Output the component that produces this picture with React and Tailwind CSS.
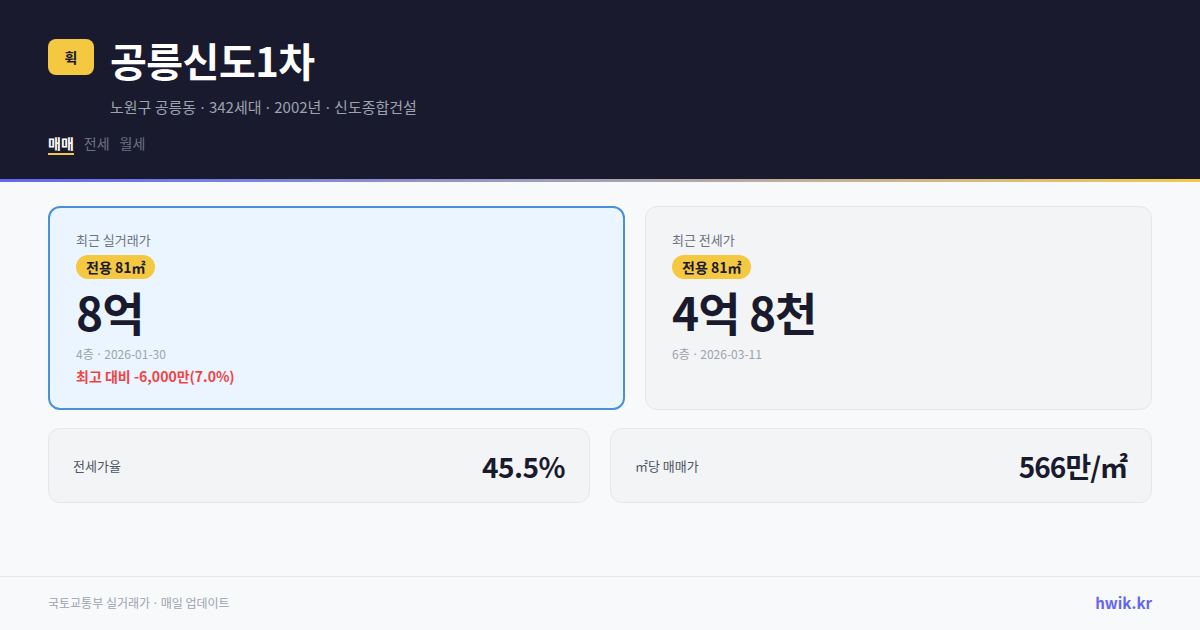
import React from "react";

const font = { fontFamily: '"Noto Sans CJK KR", "Noto Sans", sans-serif' };

function Dot() {
  return <span className="mx-[1px] font-['Noto_Sans',sans-serif]">·</span>;
}

function Badge() {
  return (
    <div className="inline-flex h-[24px] items-center rounded-full bg-[#f5c842] px-[10px] text-[14px] font-bold text-[#1a1a2e] leading-none">
      전용 81㎡
    </div>
  );
}

export default function App() {
  return (
    <div style={font} className="flex h-[630px] w-[1200px] flex-col bg-[#f8f9fb]">
      <header className="bg-[#1a1a2e] px-12 pt-[36px] pb-[24px]">
        <div className="flex items-start gap-4">
          <div className="mt-[3px] flex h-[36px] w-[46px] items-center justify-center rounded-[8px] bg-[#f5c842] text-[14px] font-bold text-[#1a1a2e]">
            휙
          </div>
          <h1 className="text-[40px] font-bold leading-[48px] tracking-[-0.5px] text-white">공릉신도1차</h1>
        </div>
        <div className="mt-[12px] pl-[62px] text-[15px] leading-[22px] text-[#9ca3af]">
          노원구 공릉동 <Dot /> 342세대 <Dot /> 2002년 <Dot /> 신도종합건설
        </div>
        <div className="mt-[15px] flex gap-[10px] text-[14px] leading-[20px]">
          <span className="border-b-2 border-[#f5c842] font-bold text-white">매매</span>
          <span className="text-[#6b7280]">전세</span>
          <span className="text-[#6b7280]">월세</span>
        </div>
      </header>
      <div className="h-[3px] bg-gradient-to-r from-[#6366f1] to-[#f5c842]"></div>

      <main className="px-12 pt-6">
        <div className="grid grid-cols-[577fr_507fr] gap-5">
          <div className="h-[204px] rounded-[12px] border-2 border-[#4a90d9] bg-[#ebf5ff] px-[26px] pt-[22px]">
            <div className="text-[13px] leading-[20px] text-[#6b7280]">최근 실거래가</div>
            <div className="mt-[4px]"><Badge /></div>
            <div className="mt-[4px] text-[46px] font-bold leading-[56px] tracking-[-1px] text-[#1a1a2e]">8억</div>
            <div className="mt-[6px] text-[12px] leading-[18px] text-[#9ca3af]">4층 <Dot /> 2026-01-30</div>
            <div className="mt-[2px] text-[14px] font-semibold leading-[20px] text-[#ef4444]">최고 대비 -6,000만(7.0%)</div>
          </div>
          <div className="h-[204px] rounded-[12px] border border-[#e5e7eb] bg-[#f3f4f6] px-[26px] pt-[23px]">
            <div className="text-[13px] leading-[20px] text-[#6b7280]">최근 전세가</div>
            <div className="mt-[4px]"><Badge /></div>
            <div className="mt-[4px] text-[46px] font-bold leading-[56px] tracking-[-1px] text-[#1a1a2e]">4억 8천</div>
            <div className="mt-[6px] text-[12px] leading-[18px] text-[#9ca3af]">6층 <Dot /> 2026-03-11</div>
          </div>
        </div>
        <div className="mt-[18px] grid grid-cols-2 gap-5">
          <div className="flex h-[75px] items-center justify-between rounded-[12px] border border-[#e5e7eb] bg-[#f3f4f6] px-6">
            <span className="text-[13px] text-[#4b5563]">전세가율</span>
            <span className="text-[28px] font-bold tracking-[-0.5px] text-[#1a1a2e]">45.5%</span>
          </div>
          <div className="flex h-[75px] items-center justify-between rounded-[12px] border border-[#e5e7eb] bg-[#f3f4f6] px-6">
            <span className="text-[13px] text-[#4b5563]">㎡당 매매가</span>
            <span className="text-[28px] font-bold tracking-[-1px] text-[#1a1a2e]">566만/㎡</span>
          </div>
        </div>
      </main>

      <footer className="mt-auto flex h-[54px] items-center justify-between border-t border-[#e5e7eb] px-12">
        <span className="text-[12px] text-[#9ca3af]">국토교통부 실거래가 <Dot /> 매일 업데이트</span>
        <span className="text-[15px] font-bold text-[#6366f1]">hwik.kr</span>
      </footer>
    </div>
  );
}
